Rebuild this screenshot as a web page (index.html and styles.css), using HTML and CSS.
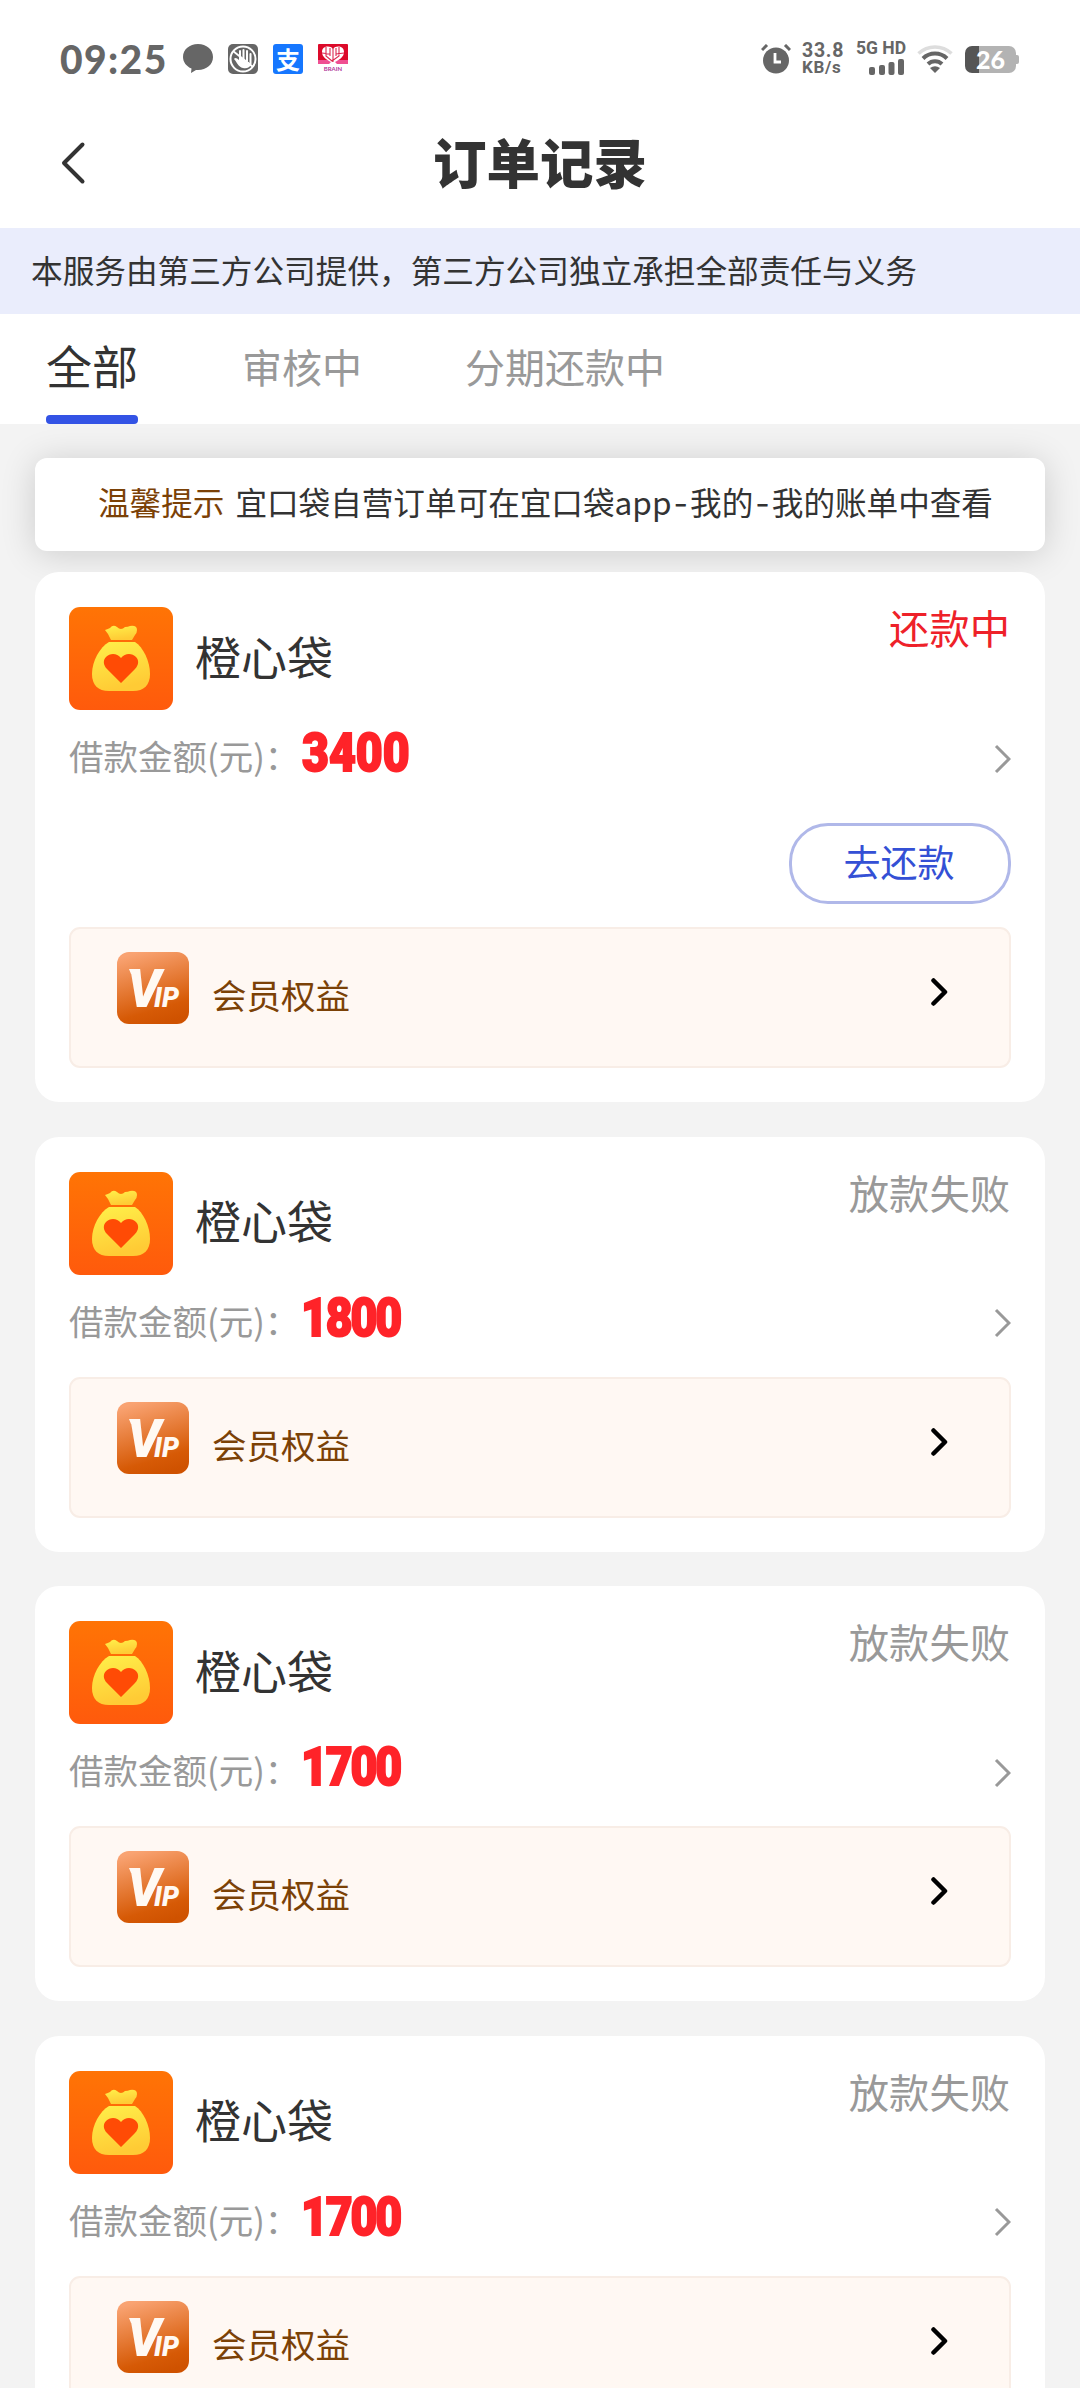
FILE: index.html
```html
<!DOCTYPE html>
<html lang="zh-CN">
<head>
<meta charset="utf-8">
<title>订单记录</title>
<link rel="stylesheet" href="styles.css">
</head>
<body>
<svg class="defs" width="0" height="0" aria-hidden="true">
  <defs>
    <linearGradient id="orange" x1="0" y1="0" x2="0" y2="1"><stop offset="0" stop-color="#ff7405"/><stop offset="1" stop-color="#ff5a0c"/></linearGradient>
    <linearGradient id="gold" x1="0" y1="0" x2="0.3" y2="1"><stop offset="0" stop-color="#fff04a"/><stop offset="1" stop-color="#ffcb35"/></linearGradient>
    <linearGradient id="copper" x1="0.3" y1="0" x2="0.6" y2="1"><stop offset="0" stop-color="#f9a372"/><stop offset="0.8" stop-color="#d65a06"/><stop offset="1" stop-color="#cf5200"/></linearGradient>
  </defs>
  <symbol id="bag" viewBox="0 0 104 103">
    <rect width="104" height="103" rx="11" fill="url(#orange)"/>
    <path fill="url(#gold)" d="M36 23q3-1 5-2 3-4 7-1 4 4 8 0 3 0 5-1 7-1 7 4 0 3-2 5l-3 5H42l-3-6-3-4z"/>
    <path fill="url(#gold)" d="M40 35h26c8 5 15 19 15 32 0 11-6 17-17 17H40c-11 0-17-6-17-17 0-13 8-27 17-32z"/>
    <path fill="#ff4b05" d="M52 76 38 62c-4-4-4-9-1-12 4-4 11-4 15 1 4-5 11-5 15-1 3 3 3 8-1 12z"/>
  </symbol>
  <symbol id="more" viewBox="0 0 17 30"><path d="M2 2 15 15 2 28" fill="none" stroke="#999" stroke-width="3"/></symbol>
  <symbol id="go" viewBox="0 0 17 28"><path d="M2.500 2.500 14 14 2.500 25.500" fill="none" stroke="#000" stroke-width="4.500" stroke-linecap="round" stroke-linejoin="round"/></symbol>
</svg>

<header class="status-bar">
  <span class="clock">09:25</span>
  <svg class="s-icon chat" viewBox="0 0 30 30"><path fill="#666" d="M15 0c8.500 0 15 5.500 15 13s-6.500 13-15 13h-2l-5 3 .5-4.500C3.500 22.500 0 18 0 13 0 5.500 6.500 0 15 0z"/></svg>
  <svg class="s-icon" viewBox="0 0 30 30"><rect width="30" height="30" rx="5" fill="#666"/><circle cx="15" cy="15" r="12.500" fill="none" stroke="#fff" stroke-width="2"/><path fill="none" stroke="#fff" stroke-width="2" stroke-linecap="round" d="M12 13V7M15.500 15V6M19 17V7M22.500 20V10"/><path fill="#fff" d="M11 11l12 9c-1 4-5 5-8 4-5-1-6-6-9-9 1-2 3-1 5 1z"/><path d="m5 7 20 16" stroke="#fff" stroke-width="1.800"/></svg>
  <span class="s-icon pay">支</span>
  <svg class="s-icon" viewBox="0 0 30 30"><path d="M1 0h28q1 0 1 1v18H0V1q0-1 1-1z" fill="#dc0a2a"/><path d="M0 16h30v4H0z" fill="#ef4f92"/><path fill="#fff" d="M15 5C12 1 4 2 4 8c0 5 5 8 9 10l-3 3h10l-3-3c4-2 9-5 9-10 0-6-8-7-11-3z"/><path d="M15 4v14M8 3v9l6 5 7-5V3M4 9l8 1M26 9l-8 1M12 4v8M18 4v8" fill="none" stroke="#dc2a50" stroke-width="1.100"/><text x="15" y="27" text-anchor="middle" class="brain">BRAIN</text></svg>
  <span class="spacer"></span>
  <svg class="alarm" viewBox="0 0 30 30"><circle cx="15" cy="16.500" r="13" fill="#666"/><path d="M1 6 6 1M24 1l5 5" stroke="#666" stroke-width="3"/><path d="M14 9v9h6" fill="none" stroke="#fff" stroke-width="2.800"/></svg>
  <span class="speed"><b>33.8</b><b>KB/s</b></span>
  <span class="signal"><b>5G HD</b>
    <svg width="36" height="16" viewBox="0 0 36 16" fill="#666"><rect x="0" y="8" width="6" height="8" rx="2"/><rect x="10" y="6" width="6" height="10" rx="2"/><rect x="19.500" y="3" width="6" height="13" rx="2"/><rect x="29" y="0" width="6" height="16" rx="2"/></svg>
  </span>
  <svg class="wifi" viewBox="0 0 36 28"><g fill="none" stroke="#666" stroke-width="4"><path d="M1.500 8.500a24 24 0 0 1 33 0" stroke="#ddd" stroke-width="3.500"/><path d="M6 13.500a17 17 0 0 1 24 0"/><path d="M11 19a10 10 0 0 1 14 0"/></g><path d="m18 28-5-5q5-3.500 10 0z" fill="#666"/></svg>
  <span class="battery"><span>26</span></span>
</header>

<nav class="title-bar">
  <svg class="back" width="26" height="44" viewBox="0 0 26 44"><path d="M22.500 3.500 4 22l18.500 18.500" fill="none" stroke="#333" stroke-width="4" stroke-linecap="round" stroke-linejoin="round"/></svg>
  <h1>订单记录</h1>
</nav>

<p class="notice">本服务由第三方公司提供，第三方公司独立承担全部责任与义务</p>

<div class="tabs">
  <span class="tab active">全部</span>
  <span class="tab">审核中</span>
  <span class="tab">分期还款中</span>
</div>

<main>
  <p class="tip"><span>温馨提示</span>宜口袋自营订单可在宜口袋app<i>-</i>我的<i>-</i>我的账单中查看</p>

  <article class="card">
    <div class="head"><svg class="logo"><use href="#bag"/></svg><h2>橙心袋</h2><span class="state due">还款中</span></div>
    <div class="amount"><span class="label">借款金额(元)：</span><strong>3400</strong><svg class="more"><use href="#more"/></svg></div>
    <div class="actions"><button>去还款</button></div>
    <div class="vip"><svg class="badge" viewBox="0 0 72 72"><rect width="72" height="72" rx="12" fill="url(#copper)"/><path d="M12 17h9v5h-7z" fill="#fff9f3"/><text x="10" y="55">V<tspan class="ip" dx="-7">IP</tspan></text></svg><span>会员权益</span><svg class="go"><use href="#go"/></svg></div>
  </article>

  <article class="card">
    <div class="head"><svg class="logo"><use href="#bag"/></svg><h2>橙心袋</h2><span class="state">放款失败</span></div>
    <div class="amount"><span class="label">借款金额(元)：</span><strong class="slim">1800</strong><svg class="more"><use href="#more"/></svg></div>
    <div class="vip"><svg class="badge" viewBox="0 0 72 72"><rect width="72" height="72" rx="12" fill="url(#copper)"/><path d="M12 17h9v5h-7z" fill="#fff9f3"/><text x="10" y="55">V<tspan class="ip" dx="-7">IP</tspan></text></svg><span>会员权益</span><svg class="go"><use href="#go"/></svg></div>
  </article>

  <article class="card">
    <div class="head"><svg class="logo"><use href="#bag"/></svg><h2>橙心袋</h2><span class="state">放款失败</span></div>
    <div class="amount"><span class="label">借款金额(元)：</span><strong class="slim">1700</strong><svg class="more"><use href="#more"/></svg></div>
    <div class="vip"><svg class="badge" viewBox="0 0 72 72"><rect width="72" height="72" rx="12" fill="url(#copper)"/><path d="M12 17h9v5h-7z" fill="#fff9f3"/><text x="10" y="55">V<tspan class="ip" dx="-7">IP</tspan></text></svg><span>会员权益</span><svg class="go"><use href="#go"/></svg></div>
  </article>

  <article class="card">
    <div class="head"><svg class="logo"><use href="#bag"/></svg><h2>橙心袋</h2><span class="state">放款失败</span></div>
    <div class="amount"><span class="label">借款金额(元)：</span><strong class="slim">1700</strong><svg class="more"><use href="#more"/></svg></div>
    <div class="vip"><svg class="badge" viewBox="0 0 72 72"><rect width="72" height="72" rx="12" fill="url(#copper)"/><path d="M12 17h9v5h-7z" fill="#fff9f3"/><text x="10" y="55">V<tspan class="ip" dx="-7">IP</tspan></text></svg><span>会员权益</span><svg class="go"><use href="#go"/></svg></div>
  </article>
</main>
</body>
</html>
```
FILE: styles.css
```css
* { box-sizing: border-box; margin: 0; }
body { height: 2388px; overflow: hidden; background: #f3f3f3; color: #333; font-family: "Noto Sans CJK SC", sans-serif; }
.defs { position: absolute; }
svg { flex: none; display: block; }

.status-bar { height: 100px; padding: 18px 64px 0 60px; display: flex; align-items: center; background: #fff; color: #666; font-family: Lato, sans-serif; }
.clock { width: 123px; font-size: 39px; font-weight: 900; line-height: 40px; letter-spacing: 1.400px; }
.s-icon { width: 30px; height: 30px; margin-right: 15px; }
.pay { flex: none; border-radius: 3px; background: #1677ff; color: #fff; font: 700 24px/29px "Noto Sans CJK SC", sans-serif; text-align: center; }
.brain { font: 700 6px Lato, sans-serif; fill: #b0389a; }
.spacer { flex: 1; }
.alarm { width: 30px; height: 30px; margin-right: 11px; }
.speed { width: 54px; display: flex; flex-direction: column; font-family: Roboto, sans-serif; font-size: 17px; line-height: 16px; }
.speed b { white-space: nowrap; letter-spacing: .7px; }
.speed b:first-child { font-size: 19.500px; }
.signal { width: 61px; margin-top: -3px; display: flex; flex-direction: column; font: 17.500px/15px Roboto, sans-serif; gap: 3px; }
.signal svg { margin-left: 13px; }
.wifi { width: 36px; height: 28px; margin-right: 12px; }
.battery { position: relative; width: 51px; height: 27px; border-radius: 7px; background: linear-gradient(90deg, #555 14px, #b3b3b3 14px); color: #fff; font-size: 25px; font-weight: 900; line-height: 27px; text-align: center; }
.battery::after { content: ""; position: absolute; right: -3px; top: 9px; width: 3px; height: 9px; border-radius: 0 2px 2px 0; background: #b3b3b3; }

.title-bar { height: 128px; padding: 0 60px 2px; display: grid; grid-template-columns: 100px 1fr 100px; align-items: center; background: #fff; }
.title-bar h1 { padding-bottom: 4px; text-align: center; font-size: 53.500px; font-weight: 900; line-height: 76px; }
.notice { height: 86px; padding-left: 31px; background: #eaedfc; font-size: 31.650px; line-height: 83px; white-space: nowrap; }
.tabs { height: 110px; padding-left: 46px; display: flex; background: #fff; }
.tab { margin-right: 103px; color: #999; font-size: 40px; line-height: 105px; }
.tab.active { position: relative; width: 92px; margin-right: 104px; color: #333; font-size: 46px; line-height: 100px; }
.tab.active::after { content: ""; position: absolute; left: 0; bottom: 0; width: 92px; height: 9px; border-radius: 4px; background: #3353e5; }

main { padding: 34px 35px 0; display: flex; flex-direction: column; }
.tip { height: 93px; margin-bottom: 21px; padding-left: 63px; border-radius: 12px; background: #fff; box-shadow: 0 3px 35px rgba(0,0,0,.16); font-size: 31.600px; line-height: 87px; white-space: nowrap; }
.tip span { margin-right: 11px; color: #7b4106; }
.tip i { margin: 0 2px; font-family: Inter, sans-serif; font-style: normal; }

.card { margin-bottom: 34.500px; padding: 35px 34px 34px; border-radius: 24px; background: #fff; }
.head { height: 103px; display: flex; align-items: center; }
.logo { width: 104px; height: 103px; }
.head h2 { margin: -8px 0 0 22px; font-size: 46px; font-weight: 400; line-height: 60px; }
.state { align-self: flex-start; margin: -10px 1px 0 auto; color: #999; font-size: 40.300px; line-height: 60px; }
.due { color: #ee2129; }
.amount { height: 102px; display: flex; align-items: center; padding-bottom: 5px; }
.label { width: 233px; margin-top: -7px; color: #999; font-size: 34.500px; line-height: 60px; white-space: nowrap; }
.amount strong { margin-top: -11px; color: #ff2329; font: 900 54px/60px Roboto, sans-serif; -webkit-text-stroke: 2px #ff2329; transform: scaleX(.86); transform-origin: left; }
.amount .slim { margin-left: -1px; letter-spacing: -2.500px; }
.more { width: 17px; height: 30px; margin-left: auto; }
.actions { height: 115px; padding-top: 11px; display: flex; justify-content: flex-end; align-items: flex-start; }
.actions button { width: 222px; height: 81px; padding: 0 2px 5px 0; border: 3px solid #b0b8e9; border-radius: 39px; background: #fff; color: #3450d5; font: 37px/70px "Noto Sans CJK SC", sans-serif; }
.vip { height: 141px; padding: 23px 61px 0 46px; display: flex; align-items: flex-start; border: 2px solid #f8ede6; border-radius: 11px; background: #fff8f3; color: #7b4106; }
.vip span { margin-left: 23px; font-size: 34.500px; line-height: 84px; }
.badge { width: 72px; height: 72px; }
.badge text { fill: #fff9f3; font: italic 900 53px Roboto, sans-serif; }
.badge .ip { font-size: 27px; }
.go { width: 17px; height: 28px; margin: 26px 0 0 auto; }
```
